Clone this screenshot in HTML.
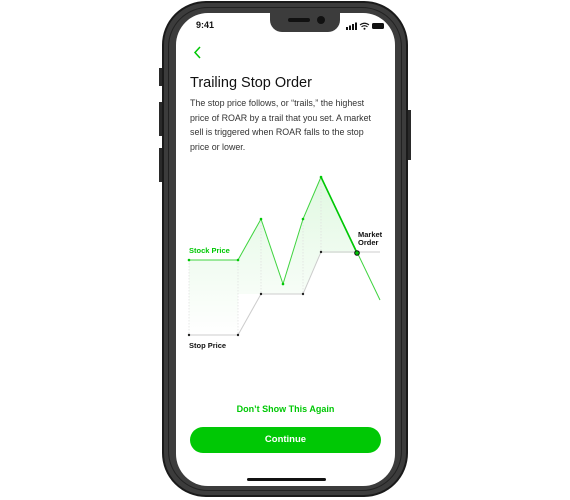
<!DOCTYPE html><html><head><style>
body{margin:0;width:570px;height:500px;background:#fff;position:relative;overflow:hidden;font-family:"Liberation Sans",sans-serif}
.phone{position:absolute;left:162px;top:1px;width:246px;height:496px;background:#3c3c3c;border-radius:44px;box-sizing:border-box;border:2px solid #1a1a1a}
.inner{position:absolute;left:4px;top:4px;right:4px;bottom:4px;border:1px solid #222;border-radius:40px}
.screen{position:absolute;left:176px;top:13px;width:219px;height:473px;background:#fff;border-radius:32px;overflow:hidden}
.notch{position:absolute;top:0;height:19px;background:#3c3c3c;border-radius:0 0 12px 12px}
.btn{position:absolute;width:3px;background:#2a2a2a;left:159px}
</style></head><body>
<div class="btn" style="top:68px;height:18px"></div>
<div class="btn" style="top:102px;height:34px"></div>
<div class="btn" style="top:148px;height:34px"></div>
<div class="btn" style="left:408px;top:110px;height:50px"></div>
<div class="phone"><div class="inner"></div></div>
<div class="screen">
<div class="notch" style="left:94px;width:70px"><div style="position:absolute;left:18px;top:5px;width:22px;height:4px;border-radius:2px;background:#111"></div><div style="position:absolute;left:47px;top:3px;width:8px;height:8px;border-radius:50%;background:#111"></div></div>
<div style="position:absolute;left:20px;top:7px;font-size:9px;font-weight:bold;color:#111">9:41</div>
<svg style="position:absolute;left:170px;top:9px" width="40" height="8">
<rect x="0" y="5" width="2" height="3" fill="#111"/><rect x="3" y="3.5" width="2" height="4.5" fill="#111"/><rect x="6" y="2" width="2" height="6" fill="#111"/><rect x="9" y="0.5" width="2" height="7.5" fill="#111"/>
<path d="M14 3 Q18.5 -0.5 23 3 M15.5 4.8 Q18.5 2.5 21.5 4.8" stroke="#111" stroke-width="1.1" fill="none"/><circle cx="18.5" cy="6.8" r="1" fill="#111"/>
<rect x="26" y="1" width="12" height="6" rx="1.5" fill="#111"/></svg>
<svg style="position:absolute;left:17px;top:33px" width="10" height="14"><path d="M7 1 L2 6.5 L7 12" stroke="#00c805" stroke-width="1.5" fill="none"/></svg>
<div style="position:absolute;left:14px;top:62px;font-size:14.5px;color:#111">Trailing Stop Order</div>
<div style="position:absolute;left:14px;top:83px;width:200px;font-size:8.9px;line-height:14.6px;color:#333;white-space:nowrap">The stop price follows, or “trails,” the highest<br>price of ROAR by a trail that you set. A market<br>sell is triggered when ROAR falls to the stop<br>price or lower.</div>
</div>
<svg style="position:absolute;left:0;top:0" width="570" height="500">
<defs><linearGradient id="g" x1="0" y1="0" x2="0" y2="1"><stop offset="0" stop-color="#00c805" stop-opacity=".15"/><stop offset="1" stop-color="#00c805" stop-opacity="0"/></linearGradient></defs>
<path d="M189 260 L238 260 L261 219 L283 284 L303 219 L321 177 L357 253 L321 253 L303 294 L238 294 L238 335 L189 335Z" fill="url(#g)" opacity=".8"/>
<g stroke="#ddd" stroke-width=".7" stroke-dasharray="1.5 1.5"><path d="M189 260V335M238 260V335M261 219V294M303 219V294M321 177V253"/></g>
<path d="M189 335H238L261 294H303L321 252H380" stroke="#ccc" stroke-width="1" fill="none"/>
<path d="M189 260H238L261 219L283 284L303 219L321 177L380 300" stroke="#3fd43f" stroke-width="1" fill="none"/>
<path d="M321 177L357 253" stroke="#00c805" stroke-width="1.6"/>
<g fill="#00c805"><circle cx="189" cy="260" r="1.3"/><circle cx="238" cy="260" r="1.3"/><circle cx="261" cy="219" r="1.3"/><circle cx="283" cy="284" r="1.3"/><circle cx="303" cy="219" r="1.3"/><circle cx="321" cy="177" r="1.3"/></g>
<g fill="#222"><circle cx="189" cy="335" r="1.2"/><circle cx="238" cy="335" r="1.2"/><circle cx="261" cy="294" r="1.2"/><circle cx="303" cy="294" r="1.2"/><circle cx="321" cy="252" r="1.2"/></g>
<circle cx="357" cy="253" r="2.3" fill="#00c805" stroke="#111" stroke-width="1"/>
<text x="189" y="253" font-size="7.5" font-weight="bold" fill="#00c805" font-family="Liberation Sans">Stock Price</text>
<text x="189" y="348" font-size="7.5" font-weight="bold" fill="#111" font-family="Liberation Sans">Stop Price</text>
<text x="358" y="237" font-size="7.5" font-weight="bold" fill="#111" font-family="Liberation Sans">Market</text>
<text x="358" y="245" font-size="7.5" font-weight="bold" fill="#111" font-family="Liberation Sans">Order</text>
</svg>
<div style="position:absolute;left:176px;width:219px;top:404px;text-align:center;font-size:9px;font-weight:bold;color:#00c805">Don’t Show This Again</div>
<div style="position:absolute;left:190px;top:427px;width:191px;height:26px;border-radius:13px;background:#00c805;color:#fff;font-size:9.5px;font-weight:bold;text-align:center;line-height:26px">Continue</div>
<div style="position:absolute;left:247px;top:478px;width:79px;height:3px;border-radius:2px;background:#111"></div>
</body></html>
